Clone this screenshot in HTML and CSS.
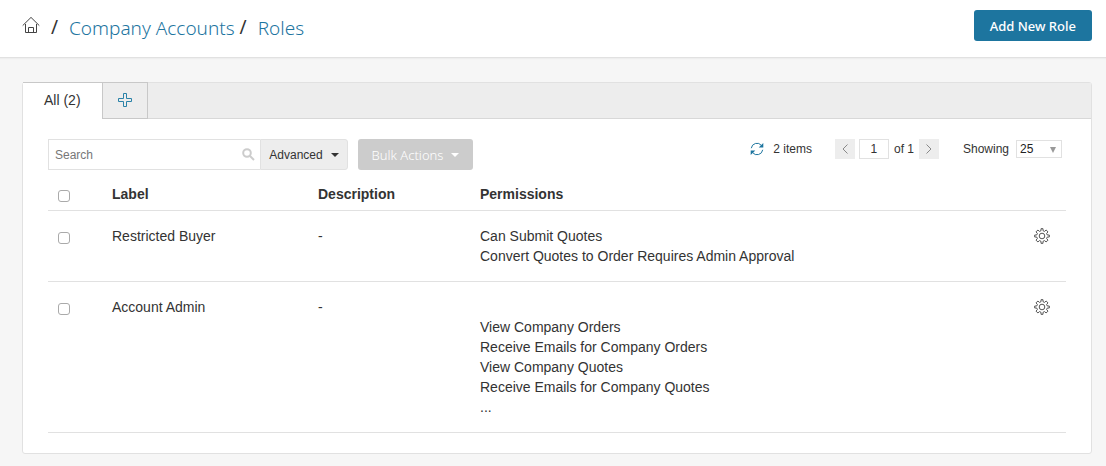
FILE: index.html
```
<!DOCTYPE html>
<html lang="en">
<head>
    <meta charset="UTF-8">
    <meta name="viewport" content="width=device-width, initial-scale=1.0">
    <title>Company Accounts / Roles</title>
    <link rel="stylesheet" href="styles.css">
</head>
<body>
    <svg class="sprite" aria-hidden="true">
        <symbol id="gear" viewBox="0 0 16 16">
            <path d="M7 .7h2v2l1.6.7 1.5-1.4 1.9 1.9-1.4 1.5.7 1.6h2v2h-2l-.7 1.6 1.4 1.5-1.9 1.9-1.5-1.4-1.6.7v2H7v-2l-1.6-.7L3.9 14 2 12.1l1.4-1.5L2.7 9h-2V7h2l.7-1.6L2 3.9 3.9 2l1.5 1.4L7 2.7z"/>
            <circle cx="8" cy="8" r="2.8"/>
        </symbol>
    </svg>

    <header class="header">
        <nav class="breadcrumb">
            <a class="home" href="#" aria-label="Home">
                <svg width="18" height="18" viewBox="0 0 18 18">
                    <path d="M.7 9.6L9 1.4l8.3 8.2M3.5 8v8.5h11V8M6.5 16.5v-5h5v5"/>
                </svg>
            </a>
            <span class="slash">/</span>
            <a class="crumb" href="#">Company Accounts</a>
            <span class="slash">/</span>
            <a class="crumb" href="#">Roles</a>
        </nav>
        <button class="btn-primary" type="button">Add New Role</button>
    </header>

    <main class="panel">
        <div class="tabs">
            <button class="tab active" type="button">All (2)</button>
            <button class="tab tab-add" type="button" aria-label="Add tab">
                <svg width="14" height="14" viewBox="0 0 14 14">
                    <path d="M5.5.5h3v5h5v3h-5v5h-3v-5h-5v-3h5z"/>
                </svg>
            </button>
        </div>

        <div class="content">
            <div class="toolbar">
                <div class="search">
                    <input class="search-input" type="text" placeholder="Search" aria-label="Search">
                    <svg class="search-icon" width="13" height="13" viewBox="0 0 13 13">
                        <circle cx="5" cy="5" r="3.8"/>
                        <path d="M8 8l4 4"/>
                    </svg>
                </div>
                <button class="advanced" type="button">Advanced <span class="caret"></span></button>
                <button class="bulk" type="button" disabled>Bulk Actions <span class="caret"></span></button>

                <div class="pager">
                    <button class="refresh" type="button" aria-label="Refresh">
                        <svg width="14" height="14" viewBox="0 0 14 14">
                            <path class="arc" d="M1.3 6.2A5.7 5.7 0 0 1 11.4 3.4M12.7 7.8A5.7 5.7 0 0 1 2.6 10.6"/>
                            <path class="head" d="M13.3 1v4.6H8.7zM.7 13V8.4h4.6z"/>
                        </svg>
                    </button>
                    <span class="items">2 items</span>
                    <button class="page-btn" type="button" aria-label="Previous page">
                        <svg width="8" height="12" viewBox="0 0 8 12"><path d="M6.5 1.5L2 6l4.5 4.5"/></svg>
                    </button>
                    <input class="page-input" type="text" value="1" aria-label="Page">
                    <span class="of">of 1</span>
                    <button class="page-btn" type="button" aria-label="Next page">
                        <svg width="8" height="12" viewBox="0 0 8 12"><path d="M1.5 1.5L6 6l-4.5 4.5"/></svg>
                    </button>
                    <label class="showing" for="page-size">Showing</label>
                    <span class="select-wrap">
                        <select class="page-size" id="page-size">
                            <option>25</option>
                            <option>50</option>
                            <option>100</option>
                        </select>
                    </span>
                </div>
            </div>

            <table class="roles">
                <thead>
                    <tr>
                        <th class="col-check"><input class="check" type="checkbox" aria-label="Select all"></th>
                        <th class="col-label">Label</th>
                        <th class="col-desc">Description</th>
                        <th>Permissions</th>
                        <th class="col-action"></th>
                    </tr>
                </thead>
                <tbody>
                    <tr>
                        <td><input class="check" type="checkbox" aria-label="Select Restricted Buyer"></td>
                        <td>Restricted Buyer</td>
                        <td>-</td>
                        <td>Can Submit Quotes<br>Convert Quotes to Order Requires Admin Approval</td>
                        <td>
                            <button class="gear" type="button" aria-label="Actions">
                                <svg width="16" height="16"><use href="#gear"/></svg>
                            </button>
                        </td>
                    </tr>
                    <tr>
                        <td><input class="check" type="checkbox" aria-label="Select Account Admin"></td>
                        <td>Account Admin</td>
                        <td>-</td>
                        <td><br>View Company Orders<br>Receive Emails for Company Orders<br>View Company Quotes<br>Receive Emails for Company Quotes<br>...</td>
                        <td>
                            <button class="gear" type="button" aria-label="Actions">
                                <svg width="16" height="16"><use href="#gear"/></svg>
                            </button>
                        </td>
                    </tr>
                </tbody>
            </table>
        </div>
    </main>
</body>
</html>
```
FILE: styles.css
```
* {
    box-sizing: border-box;
}

body {
    margin: 0;
    background: #f6f6f6;
    color: #333;
    font-family: "Liberation Sans", Arial, sans-serif;
    font-size: 14px;
    line-height: 20px;
}

button,
input,
select {
    margin: 0;
    font-family: inherit;
    color: inherit;
}

button {
    padding: 0;
    border: 0;
    background: none;
    cursor: pointer;
}

svg {
    display: block;
    fill: none;
}

.sprite {
    position: absolute;
    width: 0;
    height: 0;
}

.header {
    display: flex;
    align-items: flex-start;
    justify-content: space-between;
    padding: 10px 14px 16px 22px;
    background: #fff;
    border-bottom: 1px solid #e1e1e1;
    box-shadow: 0 1px 1px #eee;
}

.breadcrumb {
    display: flex;
    align-items: center;
    padding-top: 3px;
    font-family: "Noto Sans", sans-serif;
    font-size: 19px;
    line-height: 28px;
}

.home {
    padding-bottom: 4px;
    stroke: #444;
}

.slash {
    width: 29px;
    line-height: 24px;
    text-align: center;
}

.slash:nth-of-type(2) {
    width: 23px;
    padding-right: 6px;
}

.crumb {
    padding-top: 2px;
    line-height: 26px;
    color: #1d759f;
    font-weight: 300;
    text-decoration: none;
}

.btn-primary {
    height: 31px;
    padding: 0 16px;
    border-radius: 3px;
    background: #1d759f;
    color: #fff;
    font-family: "Noto Sans", sans-serif;
    font-size: 13px;
    font-weight: 500;
}

.panel {
    margin: 24px 14px 12px 22px;
    background: #fff;
    border: 1px solid #e1e1e1;
    border-radius: 3px;
}

.tabs {
    display: flex;
    height: 36px;
    background: #ededed;
    border-bottom: 1px solid #d8d8d8;
}

.tab {
    height: 36px;
    padding: 0 21px 2px;
    border-right: 1px solid #c8c8c8;
    box-shadow: 0 -1px 0 #c8c8c8;
    font-size: 14px;
}

.tab.active {
    background: #fff;
}

.tab-add {
    padding: 0 15px 2px;
    border-bottom: 1px solid #c8c8c8;
    stroke: #2a82a8;
}

.content {
    padding: 20px 25px;
}

.toolbar {
    display: flex;
    height: 31px;
    font-size: 12px;
}

.search {
    display: flex;
    align-items: center;
    width: 212px;
    padding-right: 5px;
    border: 1px solid #e1e1e1;
    border-right: 0;
}

.search-input {
    flex: 1;
    min-width: 0;
    padding: 0 6px;
    border: 0;
    outline: 0;
    background: none;
    font-size: 12px;
}

.search-input::placeholder {
    color: #777;
}

.search-icon {
    stroke: #ccc;
    stroke-width: 2;
}

.advanced,
.bulk {
    display: flex;
    align-items: center;
    justify-content: center;
    gap: 8px;
    border-radius: 0 3px 3px 0;
}

.advanced {
    width: 88px;
    border: 1px solid #e1e1e1;
    background: #ededed;
    font-size: 12px;
}

.bulk {
    width: 115px;
    margin-left: 10px;
    border-radius: 3px;
    background: #ccc;
    color: #fff;
    font-family: "Noto Sans", sans-serif;
    font-size: 13px;
    font-weight: 300;
}

.caret {
    border: 4px solid transparent;
    border-top-color: currentColor;
    border-bottom: 0;
}

.pager {
    display: flex;
    align-items: center;
    height: 20px;
    margin-left: auto;
    padding-right: 4px;
}

.refresh {
    margin-right: 9px;
}

.arc {
    stroke: #1d759f;
}

.head {
    fill: #1d759f;
}

.items {
    margin-right: 23px;
}

.page-btn {
    display: flex;
    align-items: center;
    justify-content: center;
    width: 20px;
    height: 20px;
    background: #ededed;
    stroke: #888;
}

.page-input {
    width: 30px;
    height: 20px;
    margin: 0 5px 0 4px;
    padding: 0;
    border: 1px solid #e1e1e1;
    text-align: center;
    font-size: 12px;
}

.of {
    margin-right: 5px;
}

.showing {
    margin: 0 7px 0 24px;
}

.select-wrap {
    position: relative;
}

.select-wrap::after {
    content: "";
    position: absolute;
    top: 7px;
    right: 6px;
    border: 3px solid transparent;
    border-top: 6px solid #999;
    border-bottom: 0;
    pointer-events: none;
}

.page-size {
    display: block;
    width: 46px;
    height: 18px;
    padding: 0 3px;
    border: 1px solid #e1e1e1;
    border-radius: 0;
    appearance: none;
    background: #fff;
    color: #222;
    font-size: 12px;
}

.roles {
    width: 100%;
    margin-top: 14px;
    border-collapse: separate;
    border-spacing: 0;
    table-layout: fixed;
}

.roles th,
.roles td {
    padding: 15px 0;
    border-bottom: 1px solid #e1e1e1;
    text-align: left;
    vertical-align: top;
}

.roles th {
    padding: 0 0 6px;
}

.col-check {
    width: 64px;
}

.col-label {
    width: 206px;
}

.col-desc {
    width: 162px;
}

.col-action {
    width: 32px;
}

.check {
    display: block;
    width: 12px;
    height: 12px;
    margin: 6px 0 0 10px;
    border: 1px solid #aaa;
    border-radius: 3px;
    appearance: none;
    background: #fff;
}

.check:checked {
    background: #1d759f;
}

.gear {
    display: block;
    margin-top: 2px;
    stroke: #555;
}
```
